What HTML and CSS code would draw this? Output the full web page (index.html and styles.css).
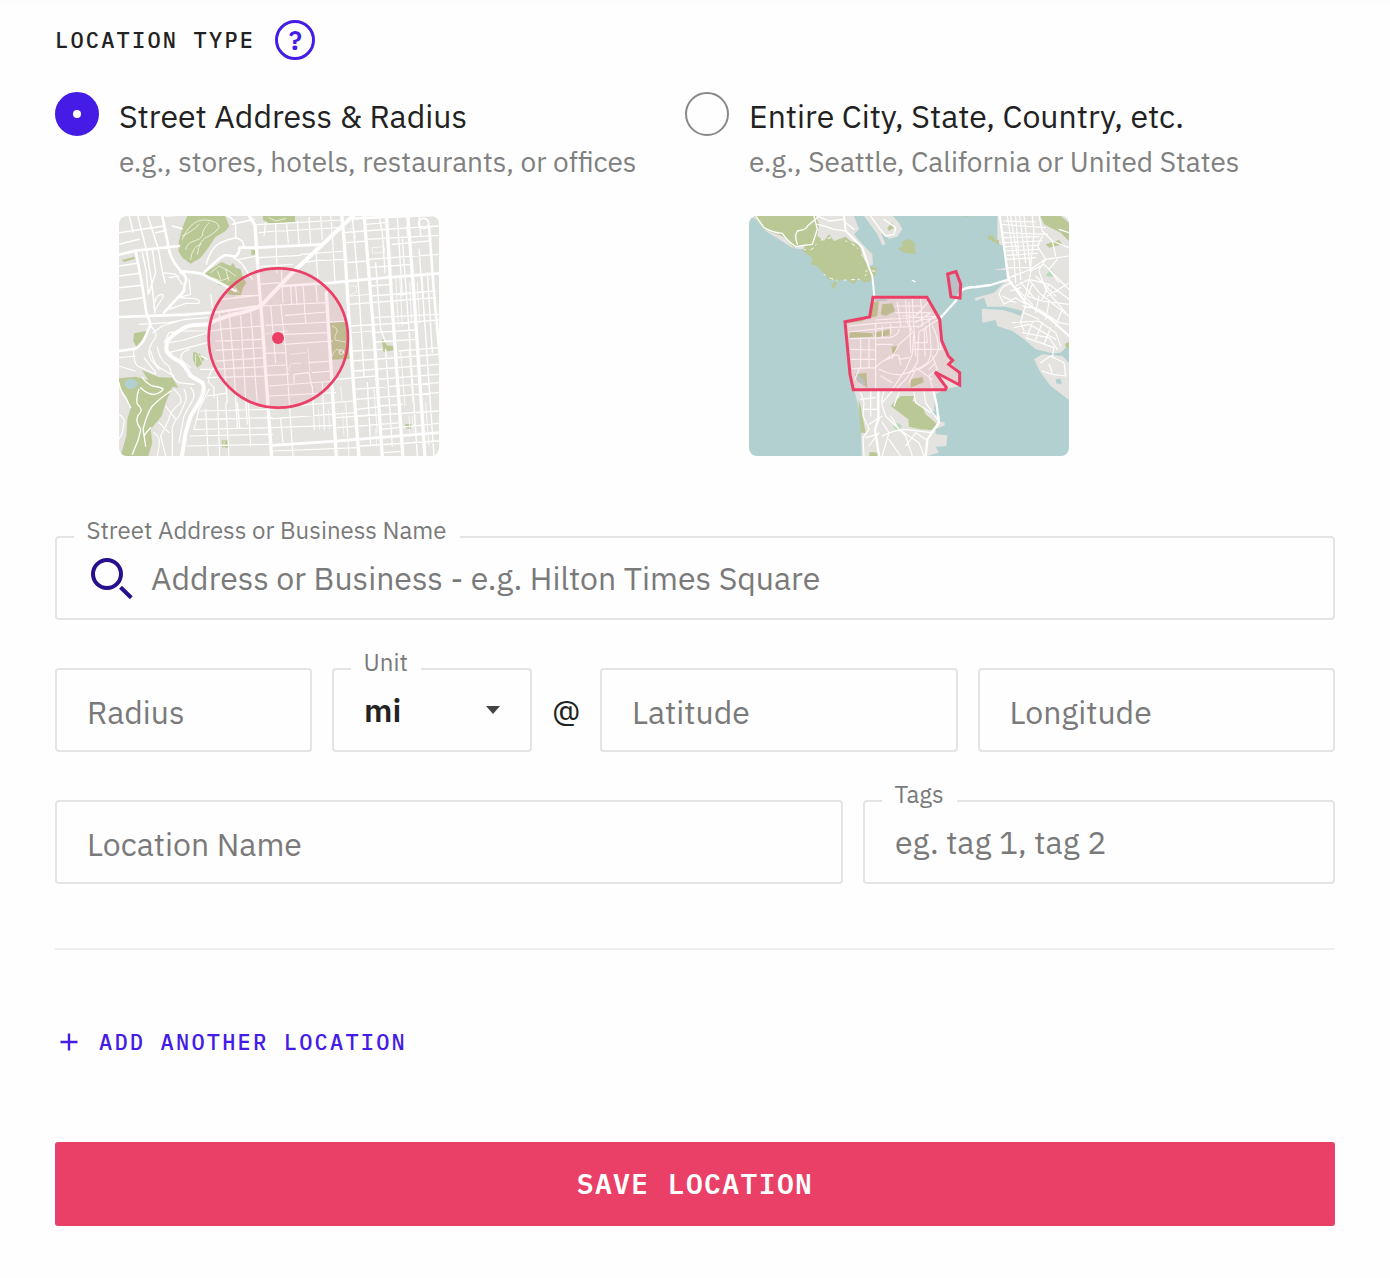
FILE: index.html
```html
<!DOCTYPE html>
<html lang="en">
<head>
<meta charset="utf-8">
<title>Location</title>
<link rel="stylesheet" href="styles.css">
</head>
<body>
<form class="page">
  <header class="heading">
    <h2 class="heading-title">LOCATION TYPE</h2>
    <span class="help">?</span>
  </header>

  <div class="options">
    <div class="option">
      <span class="radio radio-on"></span>
      <div class="option-body">
        <div class="option-title">Street Address &amp; Radius</div>
        <div class="option-hint">e.g., stores, hotels, restaurants, or offices</div>
        <svg class="map" viewBox="0 0 960 720">
          <rect width="960" height="720" fill="#e4e3df"/>
          <g fill="#bac895">
            <path d="M205 0H318L331 30 320 45 290 62 268 95 245 125 215 143 190 125 178 105 180 75 190 35Z"/>
            <path d="M256 172L308 138 335 150 342 140 350 155 365 160 372 185 382 200 372 215 365 240 325 235 335 212 300 208Z"/>
            <path d="M432 0H528V20L450 22 432 12ZM397 102H410V116H397ZM8 132L46 122 48 128 15 138ZM45 352L82 345 72 380 52 392 43 375Z"/>
            <path d="M222 408L240 412 256 428 248 445 235 455 222 432ZM633 320L682 318 690 380 692 428 640 431ZM788 370L800 372 803 388 823 390 825 403 793 407ZM858 624L878 625 876 640 860 636ZM308 673H327V695H310Z"/>
            <path d="M0 487L50 482 88 492 68 462 120 484 160 485 178 515 160 512 140 560 128 600 95 640 100 680 88 720H5L22 660 25 610 35 575 20 540 0 510Z"/>
          </g>
          <ellipse cx="36" cy="504" rx="20" ry="15" fill="#b3d0d0"/>
          <g fill="none" stroke="#fff" stroke-linejoin="round" stroke-linecap="round">
            <path stroke-width="2" d="M190 70Q200 45 215 30 235 10 260 12 300 15 300 35 290 50 270 60 240 70 235 115M200 100Q205 80 225 75 245 70 250 60 250 40 270 20M215 130Q220 90 245 85M190 60Q230 40 240 25M275 170L300 150 330 165 350 180M280 185L305 195 330 185M295 165L305 190M320 160L330 195M345 210L360 230M640 330Q655 335 655 345 645 360 648 372L680 378M640 420Q645 400 655 400L675 410M230 415V440M237 412L250 440M315 675V695M450 5L470 15 500 8"/>
            <circle cx="667" cy="408" r="7" stroke-width="3"/>
            <path stroke-width="4" d="M0 500Q5 530 20 545L35 575M65 515Q85 535 105 535 130 530 132 518 120 512 100 510 80 500 70 485M60 520Q50 545 55 565 75 580 60 595 45 610 65 640 60 670 50 690L40 715M155 525Q120 550 100 570 85 590 72 640L80 690M95 635Q80 650 75 660"/>
            <path stroke-width="12" d="M710 -8L520 170 430 265Q400 285 345 295 295 308 268 325L220 328Q200 330 180 345 135 370 143 405 155 425 180 435 200 450 215 480L250 500Q262 520 240 560L215 600 200 650 188 725"/>
            <path stroke-width="10" d="M668 -5L676 80 690 310 705 530 720 725M735 -5L747 140 768 400 790 725M802 -5L818 250 852 725M866 -5L885 240 918 725M388 -5L408 28 418 180 428 300 440 470 458 725M622 230L635 440 652 725"/>
            <path stroke-width="8" d="M930 30L945 230 975 560M0 303L200 296 300 288 420 270M412 95L610 85M418 95H362Q360 118 345 122 325 117 315 118 295 130 250 175M492 210L640 200 800 185 960 172M0 116L50 104 180 90M460 688L640 676 960 650M0 405L50 398Q70 385 80 360L95 325 82 290 70 210 50 105M130 0L150 100Q155 130 185 165L245 172 350 225M690 8L960 -4M185 168Q205 180 200 195 195 215 195 225L135 290"/>
            <circle cx="914" cy="22" r="15" stroke-width="5"/>
            <path stroke-width="4.5" d="M55 -5L82 100 98 200 108 290M85 -5L118 100 130 165 138 200M100 100L110 170 90 230M0 50L135 30M0 85L60 70M0 180L62 172M0 215L68 208M0 255L72 245M30 -5L42 48M140 0L230 -5M160 30L190 38M0 150L55 142M70 110L82 165 88 235M110 50L135 45M325 0Q350 10 350 30V65Q375 70 375 95M340 25L405 10M350 65Q305 75 290 90 270 110 262 145M345 125Q370 140 380 160L400 190"/>
            <path stroke-width="3.5" d="M105 280Q105 240 125 235 140 235 125 255L108 282M135 290L175 245 215 235 210 190M150 280L200 262 240 262Q245 250 225 248L180 245M60 325L150 320 200 310 265 305M95 330Q115 350 110 365 80 400 95 430L120 460M100 350L130 330 180 315M115 395Q125 440 150 450 160 490 180 500L225 505M95 405Q105 450 130 460L165 480M75 425L110 470M45 395Q40 430 55 450L110 475M0 425L50 420M0 450L48 465M135 380L150 350 190 345 265 345M150 410L265 380M210 400Q175 415 190 435L215 455M150 380L195 372 265 350M245 460L285 460M265 430L245 420M165 520Q190 540 185 560 150 590 150 610L125 660 140 720M195 520Q205 540 200 555L180 600Q155 630 160 650V720M215 515Q230 530 222 550L195 600 180 680M140 570L170 610M120 620L150 650M105 650Q125 660 120 690L115 720M270 520L240 580 225 640M285 455Q265 480 270 500L285 515V545M0 595Q20 610 15 620L10 650 0 670M132 170L170 175 190 205M150 185L180 180M275 235L280 275M310 250L418 238"/>
            <path stroke-width="3.5" d="M420 50L470 45 540 42 670 34M414 26L670 12M440 20L435 60M470 22L474 170M503 25L508 80M535 15L540 85M570 5L575 85M605 0L610 70M635 0L640 60M420 125L545 118M360 130L412 120M425 152L520 145M545 115L680 105M550 140L600 133 685 130M590 95L597 195M640 55L648 200M418 205L480 200M350 240L420 238M487 160L492 260M515 210L518 265M530 210L534 265M552 205L560 320M590 205L595 255M430 270L620 260M500 298L625 288M440 328L690 315M495 355L628 350M300 340L430 330M275 345L300 342M290 375L435 370M495 385L640 375M290 403L440 395M440 412L500 410M290 435L440 425M445 450L500 447M280 460L440 452M580 470L640 465M570 440L640 435M300 285L312 400 325 560M330 285L345 460 355 635M365 300L380 550 385 625M395 290L400 350 410 500 415 560M455 270L470 440M485 265L500 400 512 575 522 720M470 350L505 345M440 478L510 475M525 500L525 475 570 470 578 510M265 485L445 480M450 510L650 495M450 540L650 530M265 540L320 532M455 575L700 555M245 585L460 580M235 610L460 605M460 608L710 590M225 640L460 635M460 635L650 628M215 660L460 655M205 690L460 685M460 705L720 695M260 580L268 720M295 540L302 720M320 560L330 720M355 560L362 635M388 560L395 690M485 610L492 680M580 510L586 640M610 500L616 640"/>
            <path stroke-width="2" d="M515 415L560 410M567 395L572 465M510 465Q510 445 520 442H545M598 580L602 640M628 580L632 640M665 510L670 560M670 590L675 660M682 590L687 660M440 355L455 350M870 600L873 650M880 600L883 650M770 640L773 690M690 40L705 38 710 65M695 210H712V230L695 235M760 95L795 92 797 108 762 112Z"/>
            <path stroke-width="4" d="M672 50L735 45 830 38 960 30M740 25L800 20M740 70L960 58M680 80L745 75M745 130L960 115M745 155L880 145M680 140L745 135M820 85L930 75M750 210L820 205M755 240L950 225M690 265L820 255 950 245M760 305L960 295M695 330L830 322 960 312M760 350L890 342M770 378L890 370M700 405L790 400M840 405L960 395M700 435L960 415M705 465L960 445M770 490L960 475M650 490L770 480M705 520L960 500M710 550L960 530M780 570L850 565M715 580L780 572M650 605L960 585M655 635L850 620M785 640L960 622M725 690L960 675M790 710L850 706M700 0L720 230L735 480M770 140L785 340 800 380M780 0L790 50 798 170M835 0L850 240M850 70L870 340 895 720M900 100L918 330 945 720M900 0L905 60M745 500L755 690M800 400L820 690M925 170L940 410"/>
            <path stroke-width="2.5" d="M690 240L755 235M700 350L760 345M705 600L770 595M830 180L838 330M842 180L850 330M872 200L878 320M895 200L902 320M910 180L916 310M845 410L858 570M870 400L882 560M680 560L690 720M765 520L775 650M862 30L865 60M920 560L930 690"/>
          </g>
          <circle cx="478" cy="366" r="209" fill="#ea4067" fill-opacity=".1" stroke="#ea4067" stroke-width="8"/>
          <circle cx="477" cy="366" r="18" fill="#ea4067"/>
        </svg>
      </div>
    </div>

    <div class="option">
      <span class="radio"></span>
      <div class="option-body">
        <div class="option-title">Entire City, State, Country, etc.</div>
        <div class="option-hint">e.g., Seattle, California or United States</div>
        <svg class="map" viewBox="0 0 960 720">
          <rect width="960" height="720" fill="#b3d0d0"/>
          <g fill="#e4e3df">
            <path d="M0 0H315L330 40 315 55 340 85 370 115 372 145 350 160 300 120 200 90 155 100 130 95 50 45 20 10Z"/>
            <path d="M345 0H432L450 20 460 40 445 62 420 68 395 50 410 85 400 88 385 55Z"/>
            <path d="M745 0H960V385L935 410 910 412 860 400 825 370 790 345 745 330 740 312 700 320 698 278 760 282 790 290 815 300 820 285 770 272 715 272 705 245 680 255 678 246 735 230 760 205 780 188 775 162 735 162 770 155 765 90 745 80Z"/>
            <path d="M855 430L880 415 940 420 960 440V552L905 510 875 470Z"/>
            <path d="M288 316L370 300 372 245 534 243 572 310 580 375 600 430 632 470V510L590 520 560 535 555 580 572 600 570 618 587 618V628L560 640 560 655 595 658 592 690 560 692 570 710 535 720H338L335 600 318 530 302 475Z"/>
          </g>
          <g fill="#bac895">
            <path d="M15 0H200L210 25 205 60 225 75 240 55 255 75 290 62 305 75 330 85 345 130 360 150 385 155 380 175 365 195 345 200 330 185 315 205 290 190 265 195 255 222 245 205 265 195 240 190 225 175 205 150 185 145 190 125 160 105 170 85 135 95 100 60 70 50 45 40Z"/>
            <path d="M415 35L430 20 435 35 420 45ZM445 98L460 90 458 78 480 68 497 80 500 115 470 112ZM640 0H655V3ZM720 58L735 60 735 70 750 72V88L740 80 715 68ZM875 0H935L960 20V75L935 50 885 25ZM890 85L930 72 940 85 900 95Z"/>
            <path d="M302 347L370 352 372 362 302 366ZM375 350L422 340V358L380 364ZM368 260L390 255 385 300 365 305ZM400 265L430 262 438 285 410 300 395 295ZM290 312L360 304 340 316 295 322ZM318 475L352 470 355 515 325 495ZM428 392L446 390 440 415 430 410ZM485 490L520 483 525 498 485 515Z"/>
            <path d="M425 570L455 540 495 540 490 555 520 570 530 595 565 625 560 643 515 640 480 632 478 610ZM328 550L335 570 350 650H335ZM362 708L390 710V720H360ZM950 382L960 378V400L948 390Z"/>
          </g>
          <path fill="#b8dcb8" d="M432 630L445 620 460 630 448 644 438 640ZM890 180L905 158 918 175 915 183Z"/>
          <path fill="#b3d0d0" d="M322 470L350 500 345 510 322 485ZM920 490L935 488 938 505 922 502ZM552 585H565V598H552ZM378 250H415V255H378Z"/>
          <g fill="none" stroke="#fff" stroke-linejoin="round" stroke-linecap="round">
            <path stroke-width="4" d="M20 0L45 35Q70 50 100 52 115 75 140 92 165 88 190 85L205 40 195 0M205 25Q230 30 255 40L290 45M205 0L240 15 285 10M145 85Q135 60 145 45 175 40 175 30L205 5M315 40L290 20M365 0L390 35 410 60 435 55 440 35 405 10M490 193L498 197"/>
            <path stroke-width="6" d="M285 0L290 45 340 95 360 155 370 180 376 243"/>
            <path stroke-width="3" stroke-dasharray="4 17 9 11 2 23" d="M165 100Q195 110 205 75L245 65M225 175Q260 200 290 192L335 190 365 165M290 75Q330 85 345 135M350 165H378"/>
            <path stroke-width="7" d="M572 308L620 255 635 225Q650 213 680 213L725 207 780 190M752 0L765 90 778 190Q800 220 830 260L900 305 960 360M553 525L562 560 570 620 535 670 530 720M388 525V610L378 640 390 720"/>
            <path stroke-width="3.5" d="M775 0L795 130 800 200M800 0L815 190M825 0L838 100 845 170 825 260M850 0L855 50 845 150M755 25L890 35M760 50L895 55M765 80L880 75M770 105L870 100M775 130L860 125M778 155L850 155M780 185L845 160 890 130 960 120M800 210L840 190 900 205 960 250M845 165L885 145 920 180 960 220M870 0L880 45 910 75 960 95M880 60L865 90 890 130 870 160M910 75L920 120M930 40L960 50M840 190L870 230 920 270 960 300M870 165L890 220 950 290M820 270L870 280 930 320 960 325M850 205L835 240 880 255 960 265M790 200Q755 210 750 235L765 265 800 245 830 265 815 320 825 345M785 225L815 215M760 240L800 260M790 320L870 315 920 350 935 390M795 335L840 325 920 370M820 350L900 365 925 400M830 365L915 395 910 425M850 320L835 360M880 320L860 370M905 335L885 385M875 440L905 420 945 440 950 480 910 475 880 465M900 445L910 470M825 290L870 310M895 240L930 220 960 200M900 205L880 250M785 0L805 120M812 0L830 140M765 15L860 18M760 65L870 62M768 92L870 88M775 118L865 112M860 180L920 240M815 200L860 250M800 215L850 265M925 130L900 160 930 200M870 240L860 290M900 260L890 310M940 280L920 330"/>
            <path stroke-width="3.5" d="M300 330L380 322 500 315 560 305M300 348L420 335 520 330M305 368L420 365Q450 360 450 340M380 312L570 300M445 260L455 330M470 255L475 320 490 345M490 250L500 420M515 248L520 330M380 325V520M305 400L380 402M305 430H380M310 458L380 455Q400 430 430 425L450 385 490 350M335 370V455M360 370V455M380 385H430M390 460Q430 480 460 475L520 455Q560 430 568 400 568 360 550 330M490 400H580M495 345L490 415 470 460 430 520M510 345L505 440 470 490 440 520M540 310L545 380Q550 420 535 440 520 455 500 460L480 500M525 340L528 420M330 460L318 490M440 270H520M440 290H540M500 320L545 290M505 335L560 300M515 345L565 312M410 430Q435 410 450 420L455 445M550 420L565 460 540 480 550 515M570 310L575 400M500 455L550 490M530 330L535 380 500 380M395 480L430 500M450 430L480 425M560 440L540 460M400 330V365M425 325V355M535 260L500 300M460 300H500M480 260L485 410"/>
            <path stroke-width="3.5" d="M335 550L380 545M335 530L345 560 342 600 360 640 342 665 345 720M365 525V600M405 525Q395 555 400 570L410 600 470 660 490 720M430 525L400 560M400 600L360 625M390 650L360 690M400 620L420 650 400 720M425 600L450 640 510 680 525 720M450 530L435 570M495 530L500 560 545 590M525 525L530 560 565 610M400 660Q440 640 470 640L545 650 565 625M530 670L500 650 470 690M420 670L455 720M345 580H385M350 665L385 655"/>
          </g>
          <g fill="#ea4067" fill-opacity=".1" stroke="#ea4067" stroke-width="9">
            <path d="M372 244H534L572 310 578 374 598 420 611 433 599 445 632 470V507L558 468 592 514 589 521H313L303 475 288 317 362 303Z"/>
            <path d="M596 174L621 167 635 204 633 246 606 243Z"/>
          </g>
        </svg>
      </div>
    </div>
  </div>

  <div class="fields">
    <div class="row">
      <div class="field field-wide">
        <span class="field-label">Street Address or Business Name</span>
        <svg class="search-icon" viewBox="0 0 44 44" fill="none" stroke="#280f8c" stroke-width="4"><circle cx="16" cy="18" r="14"/><path d="M29.5 31.3L40.3 41.8"/></svg>
        <span class="placeholder">Address or Business - e.g. Hilton Times Square</span>
      </div>
    </div>
    <div class="row">
      <div class="field field-radius"><span class="placeholder low">Radius</span></div>
      <div class="field field-unit">
        <span class="field-label">Unit</span>
        <span class="value">mi</span>
        <span class="caret"></span>
      </div>
      <span class="at">@</span>
      <div class="field field-coord"><span class="placeholder low">Latitude</span></div>
      <div class="field field-coord"><span class="placeholder low">Longitude</span></div>
    </div>
    <div class="row">
      <div class="field field-name"><span class="placeholder low">Location Name</span></div>
      <div class="field field-tags">
        <span class="field-label">Tags</span>
        <span class="placeholder">eg. tag 1, tag 2</span>
      </div>
    </div>
  </div>

  <hr class="divider">

  <div class="add"><svg class="plus" viewBox="0 0 18 18"><path d="M9 .5V17.5M.5 9H17.5" stroke="#451ce6" stroke-width="2.4"/></svg><span>ADD ANOTHER LOCATION</span></div>

  <button type="button" class="save">SAVE LOCATION</button>
</form>
</body>
</html>
```
FILE: styles.css
```css
* { box-sizing: border-box; }

body {
  margin: 0;
  background: #fefefe;
  color: #222;
  font-family: "IBM Plex Sans", "Open Sans", sans-serif;
}

.page {
  display: flex;
  flex-direction: column;
  height: 1278px;
  padding: 15px 55px 52px;
  border-top: 5px solid #fcfcfc;
}

.heading {
  display: flex;
  align-items: center;
  gap: 20px;
  height: 40px;
}

.heading-title,
.add {
  margin: 0;
  font: 500 22px/30px "IBM Plex Mono", "Liberation Mono", monospace;
  letter-spacing: 2.2px;
}

.help {
  display: flex;
  align-items: center;
  justify-content: center;
  width: 40px;
  height: 40px;
  border: 3px solid #451ce6;
  border-radius: 50%;
  color: #451ce6;
  font: 600 26px/30px "IBM Plex Mono", "Liberation Mono", monospace;
}

.options {
  display: grid;
  grid-template-columns: 630px 1fr;
  margin-top: 32px;
}

.option {
  display: flex;
  gap: 20px;
}

.radio {
  flex: none;
  width: 44px;
  height: 44px;
  border: 2px solid #888;
  border-radius: 50%;
}

.radio-on {
  border: 18px solid #451ce6;
  background: #fff;
}

.option-body { white-space: nowrap; }

.option-title {
  height: 48px;
  font-size: 32px;
  line-height: 48px;
}

.option-hint {
  height: 76px;
  color: #808080;
  font-size: 28px;
  line-height: 44px;
}

.map {
  display: block;
  width: 320px;
  height: 240px;
  border-radius: 8px;
}

.fields {
  display: flex;
  flex-direction: column;
  gap: 48px;
  margin-top: 80px;
}

.row {
  display: flex;
  gap: 20px;
  height: 84px;
}

.field {
  position: relative;
  display: flex;
  align-items: center;
  padding: 0 30px;
  border: 2px solid #e4e4e4;
  border-radius: 4px;
  white-space: nowrap;
}

.field-wide { flex: 1; padding-left: 34px; }
.field-radius { width: 257px; }
.field-unit { width: 200px; }
.field-coord { flex: 1; }
.field-name { width: 788px; }
.field-tags { flex: 1; }

.field-label {
  position: absolute;
  top: -24px;
  left: 16.5px;
  padding: 0 13px;
  background: #fefefe;
  color: #7a7a7a;
  font-size: 24px;
  line-height: 32px;
}

.placeholder {
  padding-bottom: 1px;
  color: #7a7a7a;
  font-size: 32px;
  line-height: 42px;
}

.low { padding: 3px 0 0; }

.search-icon {
  width: 44px;
  height: 44px;
  margin-right: 16px;
}

.value {
  font-size: 32px;
  font-weight: 600;
}

.caret {
  margin-left: auto;
  border: 7px solid transparent;
  border-top: 8px solid #444;
  border-bottom: 0;
}

.at {
  width: 28px;
  font-size: 32px;
  line-height: 86px;
}

.divider {
  width: 100%;
  height: 2px;
  margin: 64px 0 0;
  border: 0;
  background: #eee;
}

.add {
  display: flex;
  align-items: center;
  gap: 21px;
  margin-top: 77px;
  padding-left: 5px;
  color: #451ce6;
}

.plus {
  width: 18px;
  height: 18px;
}

.save {
  height: 84px;
  margin-top: auto;
  border: 0;
  border-radius: 3px;
  background: #ea4067;
  color: #fff;
  font: 600 28px/40px "IBM Plex Mono", "Liberation Mono", monospace;
  letter-spacing: 1.4px;
}
```
